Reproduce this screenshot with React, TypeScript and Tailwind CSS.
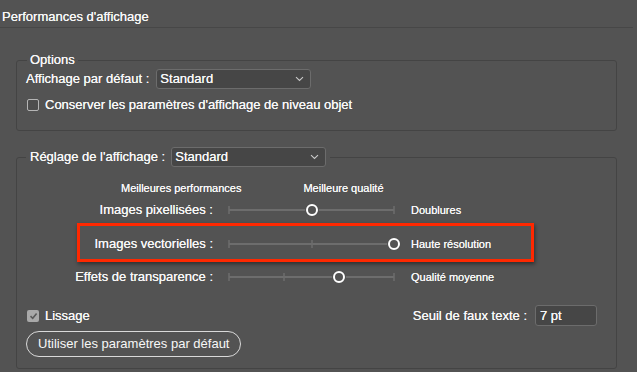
import type { ReactNode } from "react"

function Chevron() {
  return (
    <svg width="9" height="6" viewBox="0 0 9 6" className="shrink-0">
      <path d="M1 1.2l3.5 3.3 3.5-3.3" fill="none" stroke="#c9c9c9" strokeWidth="1.1" />
    </svg>
  )
}

function Select({ value }: { value: string }) {
  return (
    <div className="flex h-[20px] w-[155px] items-center justify-between rounded-[3px] border border-[#6c6c6c] bg-[#464646] pl-[3px] pr-[6px] leading-4">
      <span>{value}</span>
      <Chevron />
    </div>
  )
}

function Checkbox({ checked }: { checked?: boolean }) {
  if (checked) {
    return (
      <span className="flex size-[12px] shrink-0 items-center justify-center rounded-[2px] bg-[#a9a9a9]">
        <svg width="9" height="8" viewBox="0 0 9 8">
          <path d="M1.5 4.2l2.2 2.1L7.6 1.5" fill="none" stroke="#5a5a5a" strokeWidth="1.6" />
        </svg>
      </span>
    )
  }
  return <span className="size-[12px] shrink-0 rounded-[2px] border border-[#b5b5b5] bg-[#4d4d4d]" />
}

interface SliderProps {
  ticks: number[]
  knob: number
}

// track runs from x=6 to x=171 inside the drawing
function Slider({ ticks, knob }: SliderProps) {
  return (
    <svg width="178" height="20" viewBox="0 0 178 20" className="ml-[10px] shrink-0">
      <line x1="6" y1="10" x2="171" y2="10" stroke="#6d6d6d" strokeWidth="2" />
      {ticks.map((t) => (
        <line key={t} x1={t} y1="6" x2={t} y2="14" stroke="#6d6d6d" strokeWidth="1.5" />
      ))}
      <circle cx={knob} cy="10" r="7" fill="#535353" />
      <circle cx={knob} cy="10" r="5" fill="#535353" stroke="#ffffff" strokeWidth="2" />
    </svg>
  )
}

interface SliderRowProps {
  label: string
  value: string
  ticks: number[]
  knob: number
  className?: string
  children?: ReactNode
}

function SliderRow({ label, value, ticks, knob, className, children }: SliderRowProps) {
  return (
    <div className={`relative flex h-[20px] items-center ${className ?? ""}`}>
      <span className="w-[196px] shrink-0 text-right leading-5">{label}</span>
      <Slider ticks={ticks} knob={knob} />
      <span className="ml-[10px] text-[11px] leading-5">{value}</span>
      {children}
    </div>
  )
}

export default function App() {
  return (
    <div className="h-[372px] w-[637px] overflow-hidden bg-[#535353] font-['Liberation_Sans',Arial,sans-serif] text-[13px] text-[#f7f7f7] [text-shadow:0_0_0.35px_#ffffff]">
      <div className="h-[28px] w-[633px] border-b border-[#474747] pl-[2px] pt-[9px] leading-4">
        Performances d'affichage
      </div>

      <fieldset className="ml-[16px] mt-[24px] w-[601px] rounded-[3px] border border-[#444444] pb-[17px]">
        <legend className="ml-[10px] px-[3px] leading-4">Options</legend>
        <div className="ml-[9px] mt-[1px] flex h-[20px] items-center gap-[7px]">
          <span className="leading-4">Affichage par défaut :</span>
          <Select value="Standard" />
        </div>
        <div className="ml-[10px] mt-[8px] flex items-center gap-[6px] leading-4">
          <Checkbox />
          <span>Conserver les paramètres d'affichage de niveau objet</span>
        </div>
      </fieldset>

      <fieldset className="ml-[16px] mt-[16px] w-[601px] rounded-[3px] border border-[#444444] pb-[11px]">
        <legend className="ml-[9px] px-[4px]">
          <div className="flex items-center gap-[6px]">
            <span className="leading-4">Réglage de l'affichage :</span>
            <Select value="Standard" />
          </div>
        </legend>

        <div className="mt-[14px] flex pl-[104px] text-[11px] leading-[14px]">
          <span>Meilleures performances</span>
          <span className="ml-[62px]">Meilleure qualité</span>
        </div>

        <SliderRow className="mt-[5px]" label="Images pixellisées :" value="Doublures" ticks={[6, 171]} knob={89} />
        <SliderRow className="mt-[14px]" label="Images vectorielles :" value="Haute résolution" ticks={[6, 89]} knob={171}>
          <div className="absolute left-[60px] top-[-11px] h-[39px] w-[457px] border-[3px] border-[#ff2800] shadow-[1px_2px_4px_rgba(0,0,0,0.45)]" />
        </SliderRow>
        <SliderRow className="mt-[13px]" label="Effets de transparence :" value="Qualité moyenne" ticks={[6, 61, 171]} knob={116} />

        <div className="mt-[18px] flex h-[21px] items-center leading-4">
          <span className="ml-[10px]">
            <Checkbox checked />
          </span>
          <span className="ml-[6px]">Lissage</span>
          <span className="ml-auto">Seuil de faux texte :</span>
          <div className="ml-[8px] mr-[19px] flex h-[21px] w-[62px] items-center rounded-[3px] border border-[#6c6c6c] bg-[#464646] pl-[4px]">
            7 pt
          </div>
        </div>

        <button className="ml-[9px] mt-[5px] flex h-[26px] items-center rounded-full border border-[#d9d9d9] px-[11px] leading-4">
          Utiliser les paramètres par défaut
        </button>
      </fieldset>
    </div>
  )
}
